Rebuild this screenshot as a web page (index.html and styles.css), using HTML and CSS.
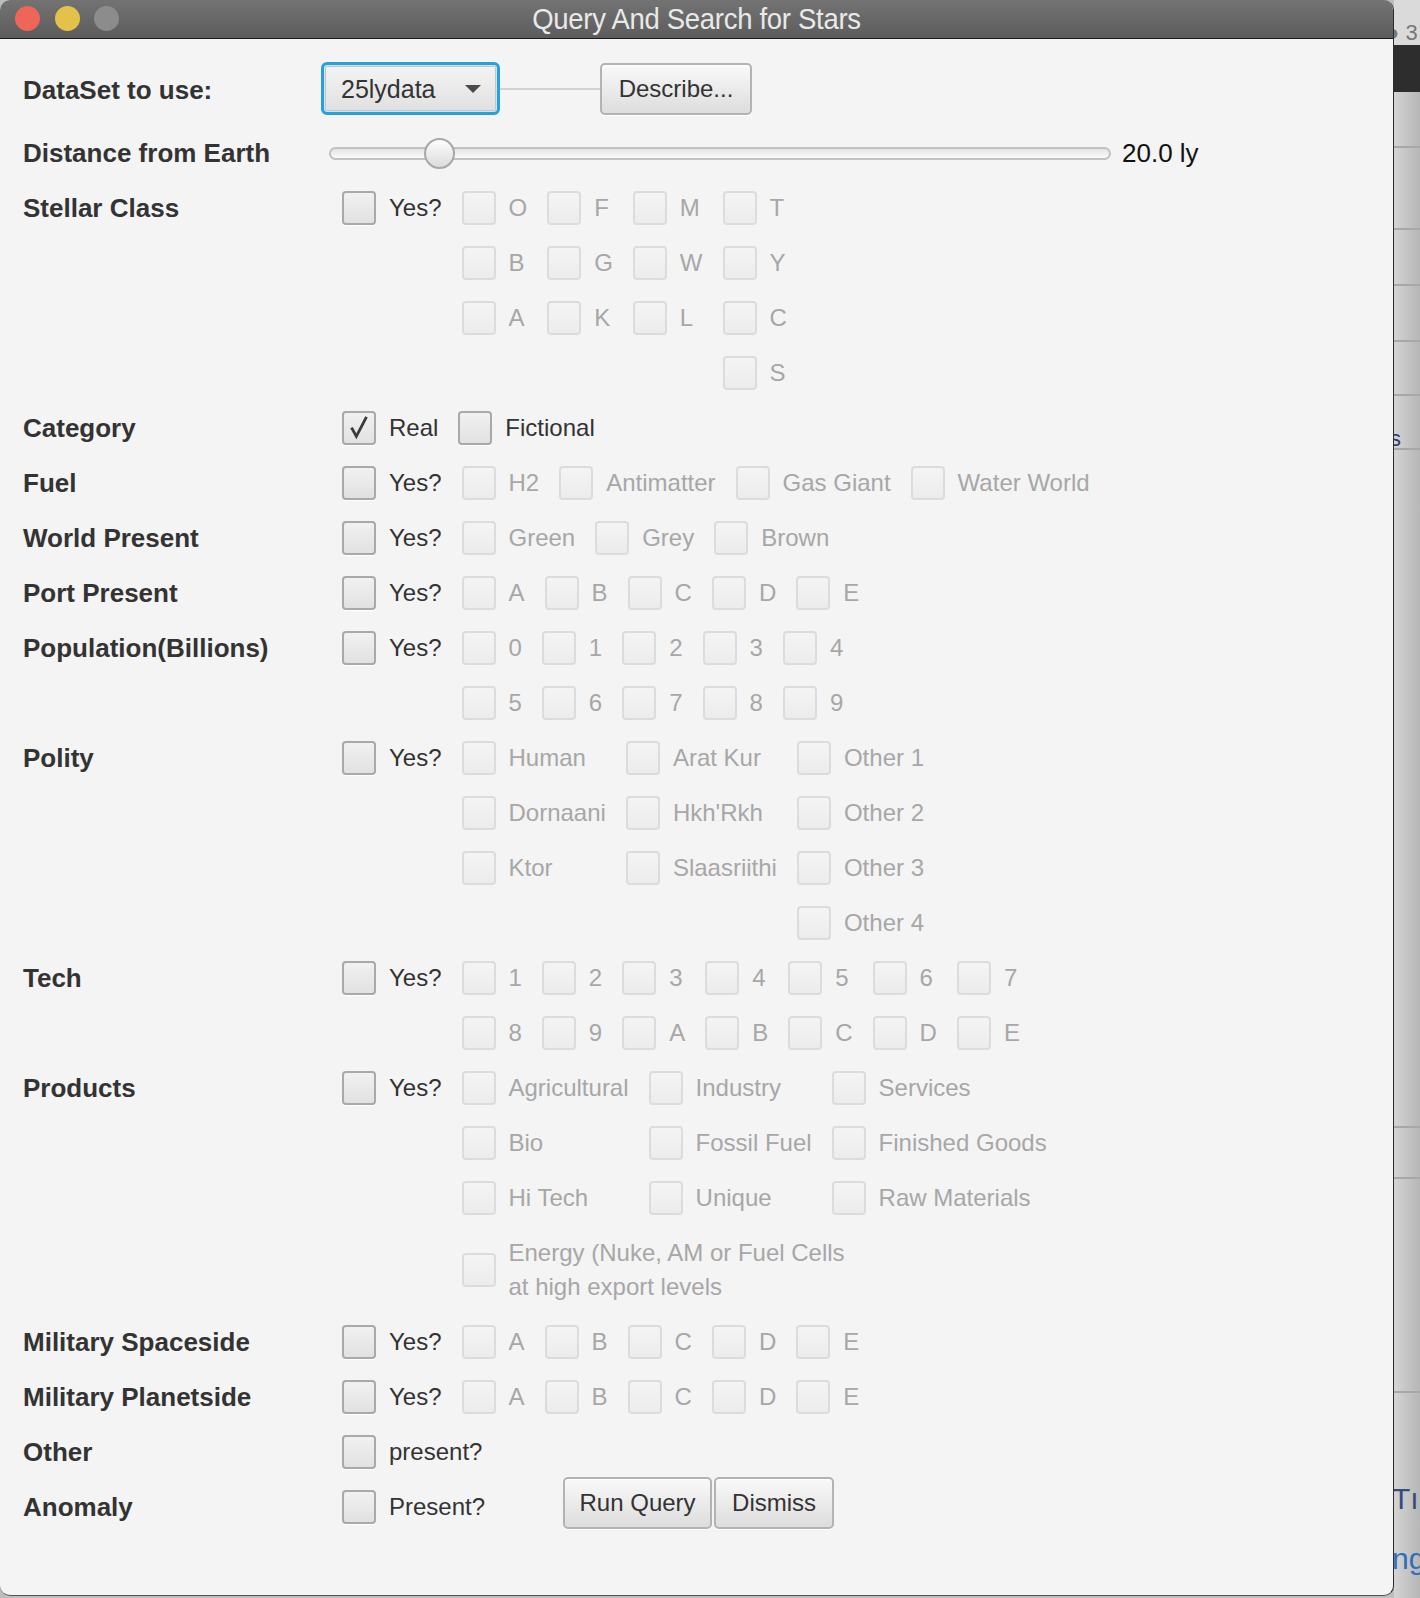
FILE: index.html
```html
<!DOCTYPE html>
<html>
<head>
<meta charset="utf-8">
<title>Query And Search for Stars</title>
<link rel="stylesheet" href="styles.css">
</head>
<body>
<div class="screen">
  <div class="window">
    <div class="titlebar">
      <div class="lights"><span class="light red"></span><span class="light yellow"></span><span class="light grey"></span></div>
      <div class="title">Query And Search for Stars</div>
    </div>
    <div class="content">
      <div class="form">
        <div class="label tall">DataSet to use:</div>
        <div class="row-data">
          <div class="combo"><span class="combo-text">25lydata</span><span class="arrow"></span></div>
          <div class="connector"></div>
          <button class="btn describe">Describe...</button>
        </div>

        <div class="label">Distance from Earth</div>
        <div class="row-slider">
          <div class="slider"><div class="track"></div><div class="thumb"></div></div>
          <span class="value">20.0 ly</span>
        </div>

        <div class="label">Stellar Class</div>
        <div class="opts c5">
          <div class="item"><span class="box"></span>Yes?</div>
          <div class="item dis"><span class="box"></span>O</div>
          <div class="item dis"><span class="box"></span>F</div>
          <div class="item dis"><span class="box"></span>M</div>
          <div class="item dis"><span class="box"></span>T</div>
          <div class="skip"></div>
          <div class="item dis"><span class="box"></span>B</div>
          <div class="item dis"><span class="box"></span>G</div>
          <div class="item dis"><span class="box"></span>W</div>
          <div class="item dis"><span class="box"></span>Y</div>
          <div class="skip"></div>
          <div class="item dis"><span class="box"></span>A</div>
          <div class="item dis"><span class="box"></span>K</div>
          <div class="item dis"><span class="box"></span>L</div>
          <div class="item dis"><span class="box"></span>C</div>
          <div class="skip"></div><div class="skip"></div><div class="skip"></div><div class="skip"></div>
          <div class="item dis"><span class="box"></span>S</div>
        </div>

        <div class="label">Category</div>
        <div class="opts c2">
          <div class="item"><span class="box checked"><svg viewBox="0 0 34 34" width="30" height="30"><path d="M8.5 16.5 L14 26.5 L25.5 4.5" fill="none" stroke="#3a3a3a" stroke-width="3.2" stroke-linejoin="miter"/></svg></span>Real</div>
          <div class="item"><span class="box"></span>Fictional</div>
        </div>

        <div class="label">Fuel</div>
        <div class="opts c5">
          <div class="item"><span class="box"></span>Yes?</div>
          <div class="item dis"><span class="box"></span>H2</div>
          <div class="item dis"><span class="box"></span>Antimatter</div>
          <div class="item dis"><span class="box"></span>Gas Giant</div>
          <div class="item dis"><span class="box"></span>Water World</div>
        </div>

        <div class="label">World Present</div>
        <div class="opts c4">
          <div class="item"><span class="box"></span>Yes?</div>
          <div class="item dis"><span class="box"></span>Green</div>
          <div class="item dis"><span class="box"></span>Grey</div>
          <div class="item dis"><span class="box"></span>Brown</div>
        </div>

        <div class="label">Port Present</div>
        <div class="opts c6">
          <div class="item"><span class="box"></span>Yes?</div>
          <div class="item dis"><span class="box"></span>A</div>
          <div class="item dis"><span class="box"></span>B</div>
          <div class="item dis"><span class="box"></span>C</div>
          <div class="item dis"><span class="box"></span>D</div>
          <div class="item dis"><span class="box"></span>E</div>
        </div>

        <div class="label">Population(Billions)</div>
        <div class="opts c6">
          <div class="item"><span class="box"></span>Yes?</div>
          <div class="item dis"><span class="box"></span>0</div>
          <div class="item dis"><span class="box"></span>1</div>
          <div class="item dis"><span class="box"></span>2</div>
          <div class="item dis"><span class="box"></span>3</div>
          <div class="item dis"><span class="box"></span>4</div>
          <div class="skip"></div>
          <div class="item dis"><span class="box"></span>5</div>
          <div class="item dis"><span class="box"></span>6</div>
          <div class="item dis"><span class="box"></span>7</div>
          <div class="item dis"><span class="box"></span>8</div>
          <div class="item dis"><span class="box"></span>9</div>
        </div>

        <div class="label">Polity</div>
        <div class="opts c4">
          <div class="item"><span class="box"></span>Yes?</div>
          <div class="item dis"><span class="box"></span>Human</div>
          <div class="item dis"><span class="box"></span>Arat Kur</div>
          <div class="item dis"><span class="box"></span>Other 1</div>
          <div class="skip"></div>
          <div class="item dis"><span class="box"></span>Dornaani</div>
          <div class="item dis"><span class="box"></span>Hkh'Rkh</div>
          <div class="item dis"><span class="box"></span>Other 2</div>
          <div class="skip"></div>
          <div class="item dis"><span class="box"></span>Ktor</div>
          <div class="item dis"><span class="box"></span>Slaasriithi</div>
          <div class="item dis"><span class="box"></span>Other 3</div>
          <div class="skip"></div><div class="skip"></div><div class="skip"></div>
          <div class="item dis"><span class="box"></span>Other 4</div>
        </div>

        <div class="label">Tech</div>
        <div class="opts c8">
          <div class="item"><span class="box"></span>Yes?</div>
          <div class="item dis"><span class="box"></span>1</div>
          <div class="item dis"><span class="box"></span>2</div>
          <div class="item dis"><span class="box"></span>3</div>
          <div class="item dis"><span class="box"></span>4</div>
          <div class="item dis"><span class="box"></span>5</div>
          <div class="item dis"><span class="box"></span>6</div>
          <div class="item dis"><span class="box"></span>7</div>
          <div class="skip"></div>
          <div class="item dis"><span class="box"></span>8</div>
          <div class="item dis"><span class="box"></span>9</div>
          <div class="item dis"><span class="box"></span>A</div>
          <div class="item dis"><span class="box"></span>B</div>
          <div class="item dis"><span class="box"></span>C</div>
          <div class="item dis"><span class="box"></span>D</div>
          <div class="item dis"><span class="box"></span>E</div>
        </div>

        <div class="label">Products</div>
        <div class="opts c4">
          <div class="item"><span class="box"></span>Yes?</div>
          <div class="item dis"><span class="box"></span>Agricultural</div>
          <div class="item dis"><span class="box"></span>Industry</div>
          <div class="item dis"><span class="box"></span>Services</div>
          <div class="skip"></div>
          <div class="item dis"><span class="box"></span>Bio</div>
          <div class="item dis"><span class="box"></span>Fossil Fuel</div>
          <div class="item dis"><span class="box"></span>Finished Goods</div>
          <div class="skip"></div>
          <div class="item dis"><span class="box"></span>Hi Tech</div>
          <div class="item dis"><span class="box"></span>Unique</div>
          <div class="item dis"><span class="box"></span>Raw Materials</div>
          <div class="skip"></div>
          <div class="item dis energy"><span class="box"></span><span>Energy (Nuke, AM or Fuel Cells<br>at high export levels</span></div>
        </div>

        <div class="label">Military Spaceside</div>
        <div class="opts c6">
          <div class="item"><span class="box"></span>Yes?</div>
          <div class="item dis"><span class="box"></span>A</div>
          <div class="item dis"><span class="box"></span>B</div>
          <div class="item dis"><span class="box"></span>C</div>
          <div class="item dis"><span class="box"></span>D</div>
          <div class="item dis"><span class="box"></span>E</div>
        </div>

        <div class="label">Military Planetside</div>
        <div class="opts c6">
          <div class="item"><span class="box"></span>Yes?</div>
          <div class="item dis"><span class="box"></span>A</div>
          <div class="item dis"><span class="box"></span>B</div>
          <div class="item dis"><span class="box"></span>C</div>
          <div class="item dis"><span class="box"></span>D</div>
          <div class="item dis"><span class="box"></span>E</div>
        </div>

        <div class="label">Other</div>
        <div class="opts c1">
          <div class="item"><span class="box"></span>present?</div>
        </div>

        <div class="label">Anomaly</div>
        <div class="row-anomaly">
          <div class="item"><span class="box"></span>Present?</div>
          <div class="actions">
            <button class="btn run">Run Query</button>
            <button class="btn dismiss">Dismiss</button>
          </div>
        </div>
      </div>
    </div>
  </div>
  <div class="backdrop">
    <div class="bd-top">&#9679; 3</div>
    <div class="bd-dark"></div>
    <div class="bd-sec s1"></div>
    <div class="bd-sec s2"></div>
    <div class="bd-sec s3"></div>
    <div class="bd-sec s4"></div>
    <div class="bd-sec s4b"></div>
    <div class="bd-sec s5"><span class="bd-s">s</span></div>
    <div class="bd-sec f1"></div>
    <div class="bd-sec s6"></div>
    <div class="bd-sec f2"></div>
    <div class="bd-text t1">Tı</div>
    <div class="bd-text t2">ng</div>
  </div>
</div>
</body>
</html>
```
FILE: styles.css
```css
* { box-sizing: border-box; }
html, body { margin: 0; padding: 0; }
body {
  width: 1420px;
  height: 1598px;
  overflow: hidden;
  background: #bdbdbd;
  font-family: "Liberation Sans", Arial, sans-serif;
}
.screen { display: flex; height: 1598px; }

.window {
  width: 1394px;
  height: 1596px;
  flex: none;
  background: #f4f4f4;
  border-radius: 10px;
  overflow: hidden;
  border-right: 1px solid #2c2c2c;
  border-bottom: 1px solid #555;
  display: flex;
  flex-direction: column;
}

.titlebar {
  height: 39px;
  flex: none;
  position: relative;
  background: linear-gradient(#737373, #5c5c5c);
  border-bottom: 1px solid #1a1a1a;
  display: flex;
  align-items: center;
  justify-content: center;
}
.lights { position: absolute; left: 15px; top: 6px; display: flex; gap: 14.5px; }
.light { width: 25px; height: 25px; border-radius: 50%; display: block; }
.light.red { background: #ef6558; }
.light.yellow { background: #e4c24a; }
.light.grey { background: #8c8c8c; }
.title { color: #e9e9e9; font-size: 27.5px; letter-spacing: -0.3px; padding-top: 1px; transform: scaleY(1.04); }

.content { padding: 23px 0 0 23px; }
.form {
  display: grid;
  grid-template-columns: 319px auto;
  row-gap: 21px;
  align-items: start;
}
.label {
  font-weight: bold;
  font-size: 26px;
  color: #333;
  line-height: 34px;
  white-space: nowrap;
}
.label.tall { height: 53px; padding-top: 3px; line-height: 50px; }

/* dataset row */
.row-data { display: flex; align-items: center; margin-left: -21px; height: 53px; }
.combo {
  width: 179px;
  height: 53px;
  border: 3px solid #27a1dc;
  border-radius: 6px;
  box-shadow: inset 0 0 0 1px #cfe6f2, inset 0 0 0 2px #c6c6c6;
  background: linear-gradient(#f4f4f4, #e0e0e0);
  display: flex;
  align-items: center;
  padding-left: 17px;
  position: relative;
}
.combo-text { font-size: 25px; color: #333; padding-top: 1px; }
.arrow {
  position: absolute;
  right: 16px;
  top: 20px;
  width: 0; height: 0;
  border-left: 8px solid transparent;
  border-right: 8px solid transparent;
  border-top: 8px solid #4a4a4a;
}
.connector { width: 100px; height: 2px; background: #d2d2d2; }

.btn {
  font-family: "Liberation Sans", Arial, sans-serif;
  font-size: 24px;
  color: #333;
  background: linear-gradient(#f9f9f9, #dddddd);
  border: 2px solid #b3b3b3;
  border-radius: 5px;
  box-shadow: inset 0 1px 0 #ffffff, 0 1px 0 #ffffff;
  padding: 0;
  margin: 0;
  text-align: center;
}
.describe { width: 152px; height: 52px; }

/* slider row */
.row-slider { display: flex; align-items: center; margin-left: -13px; height: 34px; }
.slider { position: relative; width: 782px; height: 34px; }
.track {
  position: absolute;
  left: 0; right: 0; top: 11px;
  height: 13px;
  border: 2px solid #c2c2c2;
  border-radius: 7px;
  background: linear-gradient(#e4e4e4, #fbfbfb);
}
.thumb {
  position: absolute;
  left: 95px; top: 2px;
  width: 31px; height: 31px;
  border-radius: 50%;
  border: 2px solid #a7a7a7;
  background: linear-gradient(#fdfdfd, #dcdcdc);
}
.value { margin-left: 11px; font-size: 26px; color: #111; white-space: nowrap; }

/* option grids */
.opts {
  display: grid;
  column-gap: 20px;
  row-gap: 21px;
  justify-content: start;
}
.c1 { grid-template-columns: auto; }
.c2 { grid-template-columns: repeat(2, auto); }
.c4 { grid-template-columns: repeat(4, auto); }
.c5 { grid-template-columns: repeat(5, auto); }
.c6 { grid-template-columns: repeat(6, auto); }
.c8 { grid-template-columns: repeat(8, auto); }

.item {
  display: flex;
  align-items: center;
  gap: 13px;
  height: 34px;
  font-size: 24px;
  color: #333;
  white-space: nowrap;
}
.item.dis { color: #a7a7a7; }
.box {
  width: 34px; height: 34px;
  flex: none;
  border: 2px solid #a9a9a9;
  border-radius: 4px;
  background: linear-gradient(#f1f1f1, #e1e1e1);
  box-shadow: 0 1px 0 #ffffff;
  display: flex;
  align-items: center;
  justify-content: center;
}
.dis .box {
  border-color: #dcdcdc;
  background: linear-gradient(#f4f4f4, #ececec);
  box-shadow: none;
}
.item.energy { grid-column: span 3; height: 68px; line-height: 34px; }

/* anomaly row */
.row-anomaly { display: flex; align-items: flex-start; height: 34px; }
.actions { display: flex; gap: 2px; margin-left: 78px; margin-top: -13px; }
.run { width: 149px; height: 52px; }
.dismiss { width: 120px; height: 52px; }

/* backdrop (other window behind) */
.backdrop {
  flex: 1;
  height: 1598px;
  background: linear-gradient(90deg, #d4d4d4, #b6b6b6);
  overflow: hidden;
  display: flex;
  flex-direction: column;
}
.bd-top { height: 45px; flex: none; background: #dadada; color: #777; font-size: 22px; line-height: 24px; padding-top: 21px; white-space: nowrap; margin-left: -8px; }
.bd-dark { height: 47px; flex: none; background: #2d2d2d; }
.bd-sec { flex: none; border-bottom: 2px solid #a8a8a8; }
.s1 { height: 56px; }
.s2 { height: 82px; }
.s3 { height: 56px; }
.s4 { height: 56px; }
.s4b { height: 54px; }
.s5 { height: 54px; position: relative; }
.bd-s { position: absolute; left: -4px; top: 30px; font-size: 22px; color: #2d3a6e; }
.f1 { height: 678px; }
.s6 { height: 51px; }
.f2 { height: 214px; }
.bd-text { flex: none; font-size: 30px; color: #2e6fb8; white-space: nowrap; margin-left: -2px; }
.t1 { margin-top: 91px; line-height: 30px; color: #3a4d7a; }
.t2 { margin-top: 30px; line-height: 30px; }
```
